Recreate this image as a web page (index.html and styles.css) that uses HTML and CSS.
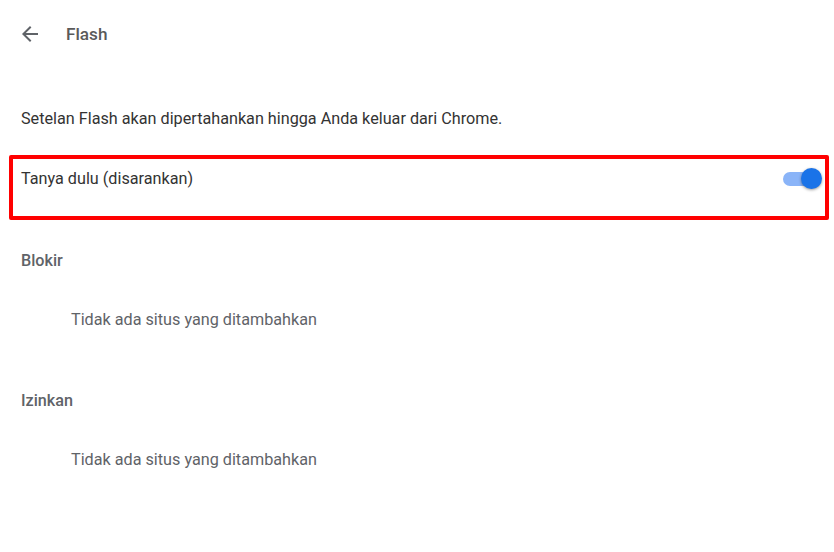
FILE: index.html
```html
<!DOCTYPE html>
<html>
<head>
<meta charset="utf-8">
<link rel="stylesheet" href="styles.css">
</head>
<body>
<div class="page">
  <div class="header">
    <span class="back">
      <svg width="24" height="24" viewBox="0 0 24 24"><path d="M20 11H7.83l5.59-5.59L12 4l-8 8 8 8 1.41-1.41L7.83 13H20v-2z" fill="#5f6368"/></svg>
    </span>
    <span class="title">Flash</span>
  </div>
  <div class="desc">Setelan Flash akan dipertahankan hingga Anda keluar dari Chrome.</div>
  <div class="highlight">
    <div class="row">
      <span class="label">Tanya dulu (disarankan)</span>
      <span class="toggle"><span class="track"></span><span class="thumb"></span></span>
    </div>
  </div>
  <div class="section-title first">Blokir</div>
  <div class="empty">Tidak ada situs yang ditambahkan</div>
  <div class="section-title">Izinkan</div>
  <div class="empty">Tidak ada situs yang ditambahkan</div>
</div>
</body>
</html>
```
FILE: styles.css
```css
html, body {
  margin: 0;
  padding: 0;
  background: #ffffff;
}
body {
  font-family: Roboto, "Liberation Sans", sans-serif;
  font-size: 16.2px;
  color: #202124;
}
.page {
  width: 834px;
  height: 552px;
  overflow: hidden;
}
.header {
  height: 67px;
  display: flex;
  align-items: center;
  padding-left: 18px;
}
.back {
  width: 24px;
  height: 24px;
  display: flex;
}
.title {
  margin-left: 24px;
  font-size: 17.2px;
  color: #5a5a5a;
  font-weight: 500;
}
.desc {
  margin-top: 40px;
  padding-left: 21px;
  line-height: 24px;
  color: #333333;
}
.highlight {
  margin: 24px 5px 0 9px;
  height: 57px;
  border: 4px solid #ff0000;
  border-radius: 2px;
}
.row {
  display: flex;
  justify-content: space-between;
  align-items: flex-start;
  padding: 8px 8px 0 8px;
}
.label {
  line-height: 24px;
  color: #333333;
}
.toggle {
  position: relative;
  width: 40px;
  height: 22px;
  margin-top: 0;
  margin-right: -5px;
}
.track {
  position: absolute;
  left: 1px;
  top: 5px;
  width: 34px;
  height: 14px;
  border-radius: 7px;
  background: #8ab4f8;
}
.thumb {
  position: absolute;
  left: 19px;
  top: 1px;
  width: 21px;
  height: 21px;
  border-radius: 50%;
  background: #1a73e8;
  box-shadow: 0 1px 3px rgba(0,0,0,0.4);
}
.section-title {
  padding-left: 21px;
  line-height: 24px;
  font-weight: 500;
  color: #5f6368;
  margin-top: 57px;
}
.section-title.first {
  margin-top: 29px;
}
.empty {
  padding-left: 71px;
  line-height: 24px;
  color: #5f6368;
  margin-top: 35px;
}
```
